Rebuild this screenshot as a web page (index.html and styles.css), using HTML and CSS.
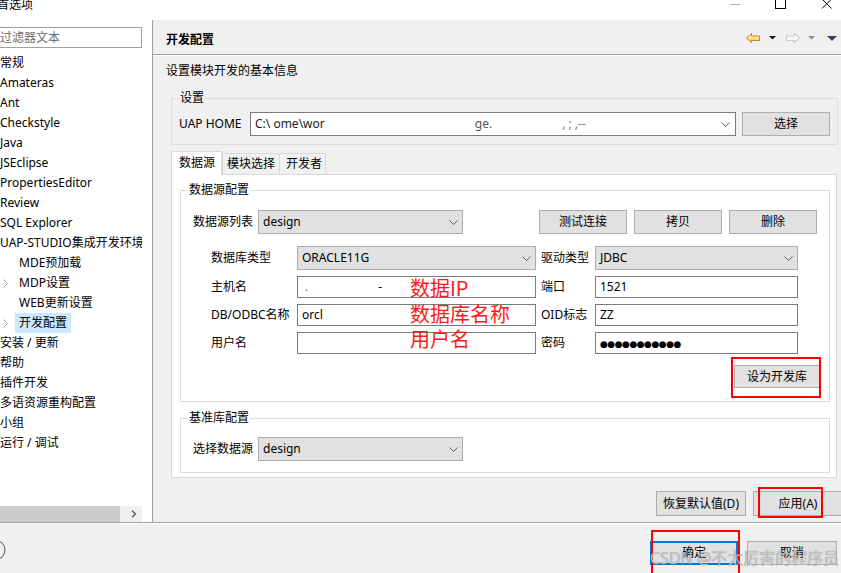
FILE: index.html
```html
<!DOCTYPE html>
<html lang="zh-CN">
<head>
<meta charset="utf-8">
<title>首选项</title>
<link rel="stylesheet" href="styles.css">
</head>
<body>
<div class="window">
  <div class="titlebar">
    <span class="title">首选项</span>
    <div class="winctrls">
      <span class="wc"><svg width="46" height="20" viewBox="0 0 46 20"><line x1="18" y1="4.5" x2="28" y2="4.5" stroke="#b4b4b4" stroke-width="1"/></svg></span>
      <span class="wc"><svg width="46" height="20" viewBox="0 0 46 20"><rect x="17.5" y="-2.5" width="10" height="11" fill="none" stroke="#000" stroke-width="1"/></svg></span>
      <span class="wc"><svg width="46" height="20" viewBox="0 0 46 20"><path d="M18 -1 L27.5 8.5 M27.5 -1 L18 8.5" stroke="#000" stroke-width="1" fill="none"/></svg></span>
    </div>
  </div>

  <div class="main">
    <aside class="left">
      <div class="filter">过滤器文本</div>
      <ul class="tree">
        <li>常规</li>
        <li>Amateras</li>
        <li>Ant</li>
        <li>Checkstyle</li>
        <li>Java</li>
        <li>JSEclipse</li>
        <li>PropertiesEditor</li>
        <li>Review</li>
        <li>SQL Explorer</li>
        <li>UAP-STUDIO集成开发环境</li>
        <li class="child"><span class="twisty"></span><span>MDE预加载</span></li>
        <li class="child"><span class="twisty"><svg width="5" height="9" viewBox="0 0 5 9"><polyline points="0.5,0.5 4.5,4.5 0.5,8.5" fill="none" stroke="#a6a6a6" stroke-width="1"/></svg></span><span>MDP设置</span></li>
        <li class="child"><span class="twisty"></span><span>WEB更新设置</span></li>
        <li class="child"><span class="twisty"><svg width="5" height="9" viewBox="0 0 5 9"><polyline points="0.5,0.5 4.5,4.5 0.5,8.5" fill="none" stroke="#a6a6a6" stroke-width="1"/></svg></span><span class="sel">开发配置</span></li>
        <li>安装 / 更新</li>
        <li>帮助</li>
        <li>插件开发</li>
        <li>多语资源重构配置</li>
        <li>小组</li>
        <li>运行 / 调试</li>
      </ul>
      <div class="hscroll">
        <div class="thumb"></div>
        <div class="arr"><svg width="6" height="8" viewBox="0 0 6 8"><polyline points="1,0.8 4.4,4 1,7.2" fill="none" stroke="#606060" stroke-width="1.5"/></svg></div>
      </div>
    </aside>

    <section class="right">
      <header class="phead">
        <h1>开发配置</h1>
        <svg class="nav" width="97" height="14" viewBox="0 0 97 14">
          <defs>
            <linearGradient id="gy" x1="0" y1="0" x2="0" y2="1">
              <stop offset="0" stop-color="#fff6d2"/>
              <stop offset="1" stop-color="#f5c650"/>
            </linearGradient>
          </defs>
          <path d="M4.5 5 L9.5 0.5 L9.5 3 L17.5 3 L17.5 7.5 L9.5 7.5 L9.5 9.5 Z" fill="url(#gy)" stroke="#c98a10" stroke-width="1" stroke-linejoin="round"/>
          <polygon points="27,3 34,3 30.5,6.5" fill="#1a1a1a"/>
          <path d="M57.5 5 L52.5 0.5 L52.5 3 L44.5 3 L44.5 7.5 L52.5 7.5 L52.5 9.5 Z" fill="#f8f8f8" stroke="#c6c6c6" stroke-width="1" stroke-linejoin="round"/>
          <polygon points="66,3 73,3 69.5,6.5" fill="#8a8a8a"/>
          <polygon points="85,3 95,3 90,8" fill="#3b3b6e"/>
        </svg>
      </header>
      <div class="pbody">
        <p class="desc">设置模块开发的基本信息</p>

        <fieldset class="group g-settings">
          <legend>设置</legend>
          <div class="home-row">
            <span class="lbl-home">UAP HOME</span>
            <div class="combo edit home-combo">
              <span class="home-text">C:\ ome\wor<span class="gap1">ge.</span><span class="gap2">, ; ,--</span></span>
              <span class="dd"><svg width="9" height="5" viewBox="0 0 9 5"><polyline points="0.5,0.5 4.5,4.5 8.5,0.5" fill="none" stroke="#606060" stroke-width="1"/></svg></span>
            </div>
            <button class="btn btn-choose">选择</button>
          </div>
        </fieldset>

        <div class="tabs">
          <span class="tab active">数据源</span>
          <span class="tab t2">模块选择</span>
          <span class="tab t3">开发者</span>
        </div>
        <div class="tabpanel">
          <fieldset class="group g-ds">
            <legend>数据源配置</legend>
            <div class="gbody">
              <div class="ds-row">
                <span class="lbl-65">数据源列表</span>
                <div class="combo w205">
                  <span>design</span>
                  <span class="dd"><svg width="9" height="5" viewBox="0 0 9 5"><polyline points="0.5,0.5 4.5,4.5 8.5,0.5" fill="none" stroke="#606060" stroke-width="1"/></svg></span>
                </div>
                <div class="ds-btns">
                  <button class="btn w88">测试连接</button>
                  <button class="btn w88">拷贝</button>
                  <button class="btn w88">删除</button>
                </div>
              </div>
              <div class="form-grid">
                <span>数据库类型</span>
                <div class="combo">
                  <span>ORACLE11G</span>
                  <span class="dd"><svg width="9" height="5" viewBox="0 0 9 5"><polyline points="0.5,0.5 4.5,4.5 8.5,0.5" fill="none" stroke="#606060" stroke-width="1"/></svg></span>
                </div>
                <span class="lbl2">驱动类型</span>
                <div class="combo">
                  <span>JDBC</span>
                  <span class="dd"><svg width="9" height="5" viewBox="0 0 9 5"><polyline points="0.5,0.5 4.5,4.5 8.5,0.5" fill="none" stroke="#606060" stroke-width="1"/></svg></span>
                </div>

                <span>主机名</span>
                <div class="inp"><span class="dot">.</span><span class="dash">-</span></div>
                <span class="lbl2">端口</span>
                <div class="inp">1521</div>

                <span>DB/ODBC名称</span>
                <div class="inp">orcl</div>
                <span class="lbl2">OID标志</span>
                <div class="inp">ZZ</div>

                <span>用户名</span>
                <div class="inp"></div>
                <span class="lbl2">密码</span>
                <div class="inp"><span class="pw">●●●●●●●●●●●</span></div>
              </div>
              <button class="btn btn-dev">设为开发库</button>
            </div>
          </fieldset>

          <fieldset class="group g-base">
            <legend>基准库配置</legend>
            <div class="ds-row">
              <span class="lbl-65">选择数据源</span>
              <div class="combo w205">
                <span>design</span>
                <span class="dd"><svg width="9" height="5" viewBox="0 0 9 5"><polyline points="0.5,0.5 4.5,4.5 8.5,0.5" fill="none" stroke="#606060" stroke-width="1"/></svg></span>
              </div>
            </div>
          </fieldset>
        </div>

        <div class="btnrow">
          <button class="btn w90 h25">恢复默认值(D)</button>
          <button class="btn w90 h25">应用(A)</button>
        </div>
      </div>
    </section>
  </div>

  <footer class="bottombar">
    <svg class="help" width="6" height="22" viewBox="0 0 6 22"><circle cx="-5" cy="11" r="10" fill="none" stroke="#555" stroke-width="1"/></svg>
    <button class="btn btn-ok">确定</button>
    <button class="btn btn-cancel">取消</button>
  </footer>
</div>

<div class="anno">数据IP<br>数据库名称<br>用户名</div>
<div class="rbox rb-dev"></div>
<div class="rbox rb-apply"></div>
<div class="rbox rb-ok"></div>
<div class="watermark">CSDN @不太厉害的程序员</div>
</body>
</html>
```

FILE: styles.css
```css
* { box-sizing: border-box; }
html, body { margin: 0; padding: 0; }
body {
  width: 841px;
  height: 573px;
  overflow: hidden;
  position: relative;
  background: #f0f0f0;
  font-family: "Noto Sans", "Noto Sans CJK SC", sans-serif;
  font-size: 12px;
  line-height: 16px;
  color: #000;
}
.window { width: 841px; height: 573px; display: flex; flex-direction: column; }

/* title bar */
.titlebar { height: 20px; background: #fff; display: flex; align-items: flex-start; flex: none; }
.title { margin: -3px 0 0 -3px; }
.winctrls { margin-left: auto; margin-right: -9px; display: flex; }
.wc { width: 46px; height: 20px; display: block; }
.wc svg { display: block; overflow: visible; }

/* main */
.main { display: flex; height: 502px; flex: none; }
.left {
  width: 153px; flex: none; background: #fff; border-right: 1px solid #a0a0a0;
  display: flex; flex-direction: column;
}
.filter {
  margin: 7px 0 0 -3px; width: 145px; height: 21px; border: 1px solid #a0a0a0;
  color: #6d6d6d; padding: 0 0 0 2px; line-height: 20px; flex: none; white-space: nowrap;
}
.tree { list-style: none; margin: 5px 0 0; padding: 0; flex: 1; width: 142px; overflow: hidden; }
.tree li { height: 20px; line-height: 20px; white-space: nowrap; }
.tree li.child { display: flex; align-items: center; }
.twisty { width: 19px; flex: none; display: flex; align-items: center; padding: 1px 0 0 3px; height: 20px; }
.twisty svg { display: block; }
.sel { background: #cce8ff; padding: 0 4px; margin-left: -4px; }
.hscroll { height: 16px; width: 142px; display: flex; background: #f0f0f0; flex: none; }
.hscroll .thumb { width: 120px; background: #cdcdcd; }
.hscroll .arr { margin-left: auto; width: 17px; display: flex; align-items: center; justify-content: center; }
.hscroll svg { display: block; }

/* right panel */
.right { flex: 1; min-width: 0; display: flex; flex-direction: column; }
.phead {
  height: 35px; flex: none; border-bottom: 1px solid #a0a0a0; box-shadow: 0 1px 0 #fff;
  display: flex; align-items: center; padding: 6px 0 0 13px;
}
.phead h1 { font-size: 12px; font-weight: bold; margin: 0; line-height: 16px; }
.nav { margin-left: auto; margin-right: 2px; display: block; }
.pbody { padding: 0 3px 0 13px; display: flex; flex-direction: column; }
.desc { margin: 8px 0 0; }

fieldset.group { border: 1px solid #dcdcdc; margin: 0; min-width: 0; }
fieldset.group legend { padding: 0 1px; line-height: 16px; }

fieldset.g-settings { margin: 11px 0 0 5px; padding: 6px 7px 8px 7px; }
.home-row { display: flex; align-items: center; }
.lbl-home { width: 71px; flex: none; }
.home-combo { flex: 1; }
.home-text { color: #222; white-space: nowrap; }
.gap1 { margin-left: 150px; color: #555; }
.gap2 { margin-left: 70px; color: #777; }

.combo {
  height: 24px; border: 1px solid #adadad; background: #e1e1e1;
  display: flex; align-items: center; padding-left: 4px; white-space: nowrap;
}
.combo.edit { background: #fff; border-color: #7a7a7a; }
.combo .dd { margin-left: auto; width: 18px; flex: none; display: flex; justify-content: center; align-items: center; }
.combo .dd svg { display: block; }
.home-combo .dd { width: 19px; }

.btn {
  font: inherit; line-height: 16px; color: #000; height: 24px; padding: 0;
  border: 1px solid #adadad; background: #e1e1e1; flex: none;
}
.btn-choose { width: 88px; margin-left: 6px; }
.w88 { width: 88px; }
.w90 { width: 90px; }
.h25 { height: 25px; }
.w205 { width: 205px; flex: none; }

/* tabs */
.tabs { display: flex; align-items: flex-end; margin: 6px 1px 0 5px; height: 23px; position: relative; z-index: 1; }
.tab {
  height: 21px; border: 1px solid #d9d9d9; border-bottom: none; background: #f0f0f0;
  line-height: 19px; padding: 0 4px; white-space: nowrap;
}
.tab.active { height: 24px; margin-bottom: -1px; background: #fff; padding: 0 6px 0 7px; line-height: 22px; }
.tab.t3 { margin-left: -1px; padding: 0 3px 0 6px; }
.tabpanel { margin: 0 1px 0 5px; background: #fff; border: 1px solid #d9d9d9; padding: 7px 6px 4px 8px; }

fieldset.g-ds { padding: 12px 9px 13px 7px; }
.gbody { display: flex; flex-direction: column; }
.ds-row { display: flex; align-items: center; padding: 0 3px 0 5px; }
.lbl-65 { width: 65px; flex: none; }
.ds-btns { margin-left: auto; display: flex; gap: 7px; }
.form-grid {
  margin-top: 12px; padding-left: 23px; display: grid;
  grid-template-columns: 86px 239px 59px 203px; row-gap: 6px; align-items: center;
}
.lbl2 { padding-left: 5px; }
.inp { height: 22px; border: 1px solid #7a7a7a; background: #fff; padding: 0 4px; line-height: 20px; white-space: nowrap; }
.dot { color: #c87a20; margin-left: 3px; }
.dash { margin-left: 70px; }
.pw { font-family: "DejaVu Sans", sans-serif; font-size: 9px; letter-spacing: -0.5px; }
.btn-dev { align-self: flex-end; width: 86px; height: 23px; margin-top: 11px; }

fieldset.g-base { margin-top: 8px; padding: 11px 9px 11px 7px; }

.btnrow { display: flex; justify-content: flex-end; gap: 7px; margin: 13px -5px 0 0; }

/* bottom bar */
.bottombar {
  height: 51px; flex: none; border-top: 1px solid #a0a0a0; box-shadow: inset 0 1px 0 #fff;
  display: flex; align-items: flex-start; padding: 18px 4px 0 0;
}
.help { display: block; margin-top: -2px; overflow: visible; }
.btn-ok { margin-left: auto; width: 88px; height: 24px; border: 2px solid #0078d7; }
.btn-cancel { margin-left: 9px; width: 90px; height: 24px; }

/* overlays */
.anno {
  position: absolute; left: 410px; top: 275px; color: #ff1a1a;
  font-family: "Noto Sans CJK SC", "Noto Sans", sans-serif; font-size: 20px; line-height: 25.5px;
  font-weight: 400;
}
.rbox { position: absolute; border: 2px solid #ff0000; }
.rb-dev { left: 731px; top: 357px; width: 90px; height: 41px; }
.rb-apply { left: 758px; top: 487px; width: 65px; height: 31px; }
.rb-ok { left: 651px; top: 530px; width: 89px; height: 50px; }
.watermark {
  position: absolute; left: 650px; top: 547px; font-size: 16px; line-height: 22px;
  color: rgba(200, 200, 200, 0.85); text-shadow: 0 0 1px rgba(90, 90, 90, 0.6);
  white-space: nowrap;
}
```
